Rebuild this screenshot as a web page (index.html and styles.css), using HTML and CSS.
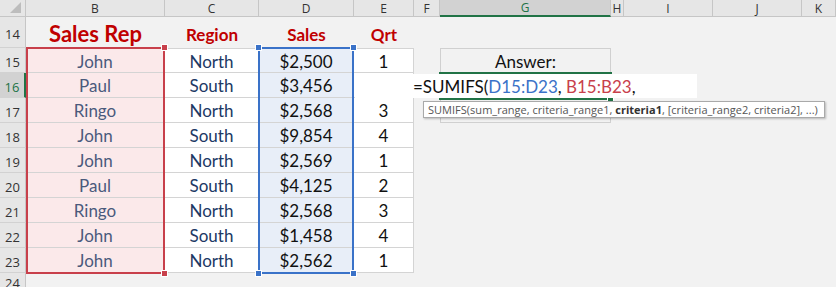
FILE: index.html
```html
<!DOCTYPE html>
<html lang="en">
<head>
	<meta charset="UTF-8">
	<title>SUMIFS</title>
	<link rel="stylesheet" href="styles.css">
</head>
<body>
	<div class="sheet">
		<!-- column headers -->
		<div class="corner"><span class="tri"></span></div>
		<div class="ch">B</div>
		<div class="ch">C</div>
		<div class="ch">D</div>
		<div class="ch">E</div>
		<div class="ch">F</div>
		<div class="ch sel">G</div>
		<div class="ch">H</div>
		<div class="ch">I</div>
		<div class="ch">J</div>
		<div class="ch">K</div>

		<!-- row 14 -->
		<div class="rh">14</div>
		<div class="head big">Sales Rep</div>
		<div class="head">Region</div>
		<div class="head">Sales</div>
		<div class="head">Qrt</div>
		<div class="bg"></div><div class="bg"></div><div class="bg"></div><div class="bg"></div><div class="bg"></div><div class="bg"></div>

		<!-- row 15 -->
		<div class="rh">15</div>
		<div class="c rep first">John</div>
		<div class="c reg first">North</div>
		<div class="c amt first">$2,500</div>
		<div class="c first">1</div>
		<div class="bg"></div>
		<div class="box top">Answer:</div>
		<div class="bg"></div><div class="bg"></div><div class="bg"></div><div class="bg"></div>

		<!-- row 16 -->
		<div class="rh sel">16</div>
		<div class="c rep">Paul</div>
		<div class="c reg">South</div>
		<div class="c amt">$3,456</div>
		<div class="c"></div>
		<div class="bg"></div>
		<div class="box"></div>
		<div class="bg"></div><div class="bg"></div><div class="bg"></div><div class="bg"></div>

		<!-- row 17 -->
		<div class="rh">17</div>
		<div class="c rep">Ringo</div>
		<div class="c reg">North</div>
		<div class="c amt">$2,568</div>
		<div class="c">3</div>
		<div class="bg"></div>
		<div class="box top bottom"></div>
		<div class="bg"></div><div class="bg"></div><div class="bg"></div><div class="bg"></div>

		<!-- row 18 -->
		<div class="rh">18</div>
		<div class="c rep">John</div>
		<div class="c reg">South</div>
		<div class="c amt">$9,854</div>
		<div class="c">4</div>
		<div class="bg wide"></div>

		<!-- row 19 -->
		<div class="rh">19</div>
		<div class="c rep">John</div>
		<div class="c reg">North</div>
		<div class="c amt">$2,569</div>
		<div class="c">1</div>
		<div class="bg wide"></div>

		<!-- row 20 -->
		<div class="rh">20</div>
		<div class="c rep">Paul</div>
		<div class="c reg">South</div>
		<div class="c amt">$4,125</div>
		<div class="c">2</div>
		<div class="bg wide"></div>

		<!-- row 21 -->
		<div class="rh">21</div>
		<div class="c rep">Ringo</div>
		<div class="c reg">North</div>
		<div class="c amt">$2,568</div>
		<div class="c">3</div>
		<div class="bg wide"></div>

		<!-- row 22 -->
		<div class="rh">22</div>
		<div class="c rep">John</div>
		<div class="c reg">South</div>
		<div class="c amt">$1,458</div>
		<div class="c">4</div>
		<div class="bg wide"></div>

		<!-- row 23 -->
		<div class="rh">23</div>
		<div class="c rep">John</div>
		<div class="c reg">North</div>
		<div class="c amt">$2,562</div>
		<div class="c">1</div>
		<div class="bg wide"></div>

		<!-- row 24 -->
		<div class="rh last">24</div>
		<div class="bg full"></div>

		<!-- range highlights drawn over the cells -->
		<div class="range red">
			<span class="hd tr"></span><span class="hd br"></span>
		</div>
		<div class="range blue">
			<span class="hd tl"></span><span class="hd tr"></span>
			<span class="hd bl"></span><span class="hd br"></span>
		</div>

		<div class="selbox"><span class="fill"></span></div>

		<div class="edit">=SUMIFS(<span class="r-blue">D15:D23</span>, <span class="r-red">B15:B23</span>,</div>

		<div class="tip">SUMIFS(sum_range, criteria_range1, <b>criteria1</b>, [criteria_range2, criteria2], ...)</div>
	</div>
</body>
</html>
```

FILE: styles.css
```css
html, body{
	margin: 0;
	padding: 0;
	background: #f2f2f2;
	overflow: hidden;
}

.sheet{
	position: relative;
	display: grid;
	grid-template-columns: 26px 139px 94px 95px 60px 26px 171px 13px 89px 89px 34px;
	grid-template-rows: 17px 31px repeat(9, 25px) 14px;
	width: 836px;
	height: 287px;
	font-family: Lato, "Open Sans", sans-serif;
	font-size: 17px;
	color: #111;
}

.sheet > div{
	box-sizing: border-box;
}

.corner{
	position: relative;
	background: #e6e6e6;
	border-right: 1px solid #c6c6c6;
	border-bottom: 1px solid #c6c6c6;
}

.tri{
	position: absolute;
	right: 4px;
	bottom: 3px;
	width: 0;
	height: 0;
	border-left: 11px solid transparent;
	border-bottom: 11px solid #bdbdbd;
}

.ch{
	display: flex;
	align-items: center;
	justify-content: center;
	background: #e6e6e6;
	border-right: 1px solid #c6c6c6;
	border-bottom: 1px solid #c6c6c6;
	font-family: "Open Sans", sans-serif;
	font-size: 12px;
	color: #333;
}

.ch.sel{
	background: #d2d2d2;
	color: #217346;
	border-bottom: 2px solid #217346;
}

.rh{
	display: flex;
	align-items: center;
	justify-content: center;
	padding-top: 3px;
	background: #e6e6e6;
	border-right: 1px solid #c6c6c6;
	border-bottom: 1px solid #d2d2d2;
	font-family: "Open Sans", sans-serif;
	font-size: 13px;
	color: #333;
}

.rh.last{
	align-items: flex-start;
	padding-top: 4px;
	overflow: hidden;
	line-height: 13px;
	border-bottom: none;
}

.rh.sel{
	background: #d2d2d2;
	color: #217346;
	border-right: 2px solid #217346;
}

.head{
	display: flex;
	align-items: center;
	justify-content: center;
	padding-top: 4px;
	font-weight: bold;
	font-size: 17px;
	color: #c00000;
}

.head.big{
	font-size: 22px;
	padding-top: 1px;
}

.c{
	display: flex;
	align-items: center;
	justify-content: center;
	padding-top: 1px;
	background: #fff;
	border-right: 1px solid #d4d4d4;
	border-bottom: 1px solid #d4d4d4;
}

.c.first{
	border-top: 1px solid #d4d4d4;
}

.rep{
	background: #fbe9ea;
	color: #4a5a7c;
}

.reg{
	color: #203864;
}

.amt{
	background: #e8eef8;
}

.bg.wide{
	grid-column: span 6;
}

.bg.full{
	grid-column: span 10;
}

.box{
	display: flex;
	align-items: center;
	justify-content: center;
	padding-top: 1px;
	border-left: 1px solid #d0d0d0;
	border-right: 1px solid #d0d0d0;
	color: #111;
}

.box.top{
	border-top: 1px solid #d0d0d0;
}

.box.bottom{
	border-bottom: 1px solid #d0d0d0;
}

/* reference ranges */
.range{
	position: absolute;
	top: 47px;
	height: 227px;
	box-sizing: border-box;
	border: 2px solid;
}

.range.red{
	left: 26px;
	width: 139px;
	border-color: #c8404b;
}

.range.blue{
	left: 258px;
	width: 96px;
	border-color: #3a72c8;
}

.hd{
	position: absolute;
	width: 5px;
	height: 5px;
	border: 1px solid #fff;
}

.red .hd{ background: #c8404b; }
.blue .hd{ background: #3a72c8; }

.hd.tl{ left: -5px; top: -5px; }
.hd.tr{ right: -5px; top: -5px; }
.hd.bl{ left: -5px; bottom: -5px; }
.hd.br{ right: -5px; bottom: -5px; }

/* active cell G16 */
.selbox{
	position: absolute;
	left: 439px;
	top: 72px;
	width: 173px;
	height: 28px;
	box-sizing: border-box;
	border: 2px solid #217346;
}

.fill{
	position: absolute;
	right: -4px;
	bottom: -5px;
	width: 5px;
	height: 5px;
	background: #217346;
	border: 1px solid #fff;
}

.edit{
	position: absolute;
	left: 355px;
	top: 74px;
	width: 342px;
	height: 24px;
	box-sizing: border-box;
	padding-left: 58px;
	padding-top: 1px;
	background: #fff;
	line-height: 23px;
	font-size: 17px;
	color: #111;
	white-space: nowrap;
}

.r-blue{ color: #3a72c8; }
.r-red{ color: #c8404b; }

.tip{
	position: absolute;
	left: 423px;
	top: 101px;
	width: 402px;
	height: 17px;
	box-sizing: border-box;
	padding-left: 4px;
	background: #fff;
	border: 1px solid #a9a9a9;
	box-shadow: 1px 1px 2px rgba(0, 0, 0, 0.25);
	font-family: "Open Sans", sans-serif;
	font-size: 11px;
	letter-spacing: 0.02px;
	line-height: 15px;
	color: #555;
	white-space: nowrap;
}

.tip b{
	color: #333;
}
```
